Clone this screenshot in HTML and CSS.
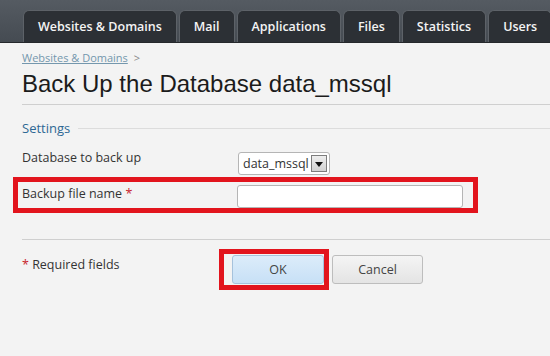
FILE: index.html
```html
<!DOCTYPE html>
<html lang="en">
<head>
    <meta charset="UTF-8">
    <title>Back Up the Database data_mssql</title>
    <link rel="stylesheet" href="styles.css">
</head>
<body>
    <div class="topbar">
        <a class="tab" href="#">Websites &amp; Domains</a>
        <a class="tab" href="#">Mail</a>
        <a class="tab" href="#">Applications</a>
        <a class="tab" href="#">Files</a>
        <a class="tab" href="#">Statistics</a>
        <a class="tab" href="#">Users</a>
    </div>

    <div class="content">
        <div class="breadcrumb">
            <a href="#">Websites &amp; Domains</a> <span class="sep">&gt;</span>
        </div>
        <h1>Back Up the Database data_mssql</h1>

        <div class="section">
            <div class="legend"><span>Settings</span></div>

            <div class="row row-first">
                <label class="label">Database to back up</label>
                <div class="select">
                    <span class="select-value">data_mssql</span>
                    <span class="select-arrow"></span>
                </div>
            </div>

            <div class="row highlight">
                <label class="label">Backup file name <span class="req">*</span></label>
                <input class="text-input" type="text">
            </div>
        </div>

        <div class="buttons-row">
            <div class="label"><span class="req">*</span> Required fields</div>
            <div class="buttons">
                <span class="btn-mark"><button class="btn btn-ok">OK</button></span>
                <button class="btn">Cancel</button>
            </div>
        </div>
    </div>
</body>
</html>
```

FILE: styles.css
```css
* {
    margin: 0;
    padding: 0;
    box-sizing: border-box;
}

body {
    background: #f3f3f3;
    font-family: 'Open Sans', 'DejaVu Sans', sans-serif;
    font-size: 12px;
    color: #333;
    width: 550px;
    height: 356px;
    overflow: hidden;
}

/* top navigation */
.topbar {
    height: 43px;
    background: linear-gradient(#555b62, #454b52);
    border-bottom: 1px solid #25282c;
    display: flex;
    align-items: flex-end;
    gap: 2px;
    padding-left: 23px;
    white-space: nowrap;
}

.tab {
    height: 32px;
    display: flex;
    align-items: center;
    padding: 0 14px;
    background: #2c3035;
    border: 1px solid #5d6268;
    border-bottom: none;
    border-radius: 6px 6px 0 0;
    color: #f4f4f4;
    font-weight: 600;
    font-size: 12.5px;
    text-decoration: none;
}

/* page body */
.content {
    padding-left: 22px;
}

.breadcrumb {
    margin-top: 8px;
    font-size: 11px;
    line-height: 14px;
    color: #888;
}

.breadcrumb a {
    color: #7497ad;
}

.breadcrumb .sep {
    margin-left: 3px;
}

h1 {
    font-family: 'Liberation Sans', Arial, sans-serif;
    font-weight: normal;
    font-size: 24px;
    line-height: 28px;
    color: #1b1b1b;
    margin-top: 5px;
    padding-bottom: 6px;
    border-bottom: 1px solid #cfcfcf;
}

.section {
    padding-top: 14px;
}

.legend {
    display: flex;
    align-items: center;
    gap: 8px;
    color: #2d6894;
    font-size: 13px;
    line-height: 18px;
}

.legend::after {
    content: '';
    flex: 1;
    border-top: 1px solid #dcdcdc;
}

.row {
    display: grid;
    grid-template-columns: 216px 226px;
    align-items: start;
}

.row-first {
    margin-top: 13px;
}

.label {
    font-size: 12.5px;
    line-height: 16px;
}

.req {
    color: #c8232c;
}

.select {
    margin-top: 2px;
    width: 92px;
    height: 23px;
    display: flex;
    align-items: stretch;
    background: #fff;
    border: 1px solid #b5b5b5;
    border-radius: 3px;
    font-size: 12.5px;
}

.select-value {
    flex: 1;
    display: flex;
    align-items: center;
    padding-left: 4px;
}

.select-arrow {
    width: 16px;
    margin: 2px 2px 2px 0;
    background: linear-gradient(#eee, #d2d2d2);
    border: 1px solid #7d7d7d;
    position: relative;
}

.select-arrow::after {
    content: '';
    position: absolute;
    left: 3px;
    top: 6px;
    border-left: 4px solid transparent;
    border-right: 4px solid transparent;
    border-top: 5px solid #111;
}

.highlight {
    margin: 2px 0 0 -9px;
    width: 465px;
    height: 36px;
    border: 5px solid #e2141d;
    padding: 3px 0 0 4px;
    grid-template-columns: 215px 226px;
}

.highlight .label {
    padding-top: 1px;
}

.text-input {
    height: 23px;
    background: #fff;
    border: 1px solid #b5b5b5;
    border-radius: 3px;
}

.buttons-row {
    margin-top: 26px;
    border-top: 1px solid #cfcfcf;
    display: grid;
    grid-template-columns: 197px auto;
    align-items: start;
}

.buttons-row .label {
    padding-top: 17px;
}

.buttons {
    display: flex;
    align-items: center;
    padding-top: 9px;
}

.btn-mark {
    display: inline-block;
    border: 5px solid #e2141d;
    padding: 1px 0 1px 8px;
}

.btn {
    width: 91px;
    height: 29px;
    font-family: 'Open Sans', 'DejaVu Sans', sans-serif;
    font-size: 12.5px;
    color: #444;
    background: linear-gradient(#f4f4f4, #e4e4e4);
    border: 1px solid #bdbdbd;
    border-radius: 3px;
    margin-left: 3px;
}

.btn-ok {
    width: 92px;
    margin-left: 0;
    background: linear-gradient(#dcecfa, #c7e0f6);
    border-color: #a6c2dc;
}
```
